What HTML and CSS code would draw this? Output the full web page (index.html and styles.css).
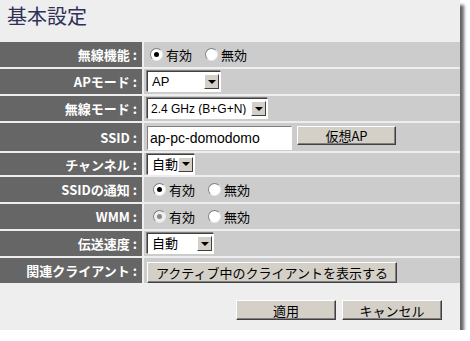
FILE: index.html
```html
<!DOCTYPE html>
<html lang="ja">
<head>
    <meta charset="UTF-8">
    <title>基本設定</title>
    <link rel="stylesheet" href="styles.css">
</head>
<body>
    <div class="panel">
        <h1 class="title">基本設定</h1>

        <div class="form">
            <div class="row">
                <div class="label">無線機能 :</div>
                <div class="value radios radios-first">
                    <span class="radio checked"></span><span class="opt">有効</span>
                    <span class="radio"></span><span class="opt">無効</span>
                </div>
            </div>
            <div class="row">
                <div class="label">APモード :</div>
                <div class="value">
                    <span class="select w-ap"><span class="select-text">AP</span><span class="select-btn"><span class="arrow"></span></span></span>
                </div>
            </div>
            <div class="row">
                <div class="label">無線モード :</div>
                <div class="value">
                    <span class="select w-mode"><span class="select-text small">2.4 GHz (B+G+N)</span><span class="select-btn"><span class="arrow"></span></span></span>
                </div>
            </div>
            <div class="row row-tall">
                <div class="label">SSID :</div>
                <div class="value">
                    <span class="textbox">ap-pc-domodomo</span>
                    <button class="btn btn-vap">仮想AP</button>
                </div>
            </div>
            <div class="row row-short">
                <div class="label">チャンネル :</div>
                <div class="value">
                    <span class="select w-ch"><span class="select-text">自動</span><span class="select-btn"><span class="arrow"></span></span></span>
                </div>
            </div>
            <div class="row">
                <div class="label">SSIDの通知 :</div>
                <div class="value radios">
                    <span class="radio checked"></span><span class="opt">有効</span>
                    <span class="radio"></span><span class="opt">無効</span>
                </div>
            </div>
            <div class="row">
                <div class="label">WMM :</div>
                <div class="value radios">
                    <span class="radio checked disabled"></span><span class="opt">有効</span>
                    <span class="radio"></span><span class="opt">無効</span>
                </div>
            </div>
            <div class="row">
                <div class="label">伝送速度 :</div>
                <div class="value">
                    <span class="select w-rate"><span class="select-text">自動</span><span class="select-btn"><span class="arrow"></span></span></span>
                </div>
            </div>
            <div class="row">
                <div class="label">関連クライアント :</div>
                <div class="value">
                    <button class="btn btn-clients">アクティブ中のクライアントを表示する</button>
                </div>
            </div>
        </div>

        <div class="actions">
            <button class="btn btn-action">適用</button>
            <button class="btn btn-action">キャンセル</button>
        </div>
    </div>
</body>
</html>
```

FILE: styles.css
```css
body {
    margin: 0;
    background-color: #fff;
    font-family: "Liberation Sans", "Noto Sans CJK JP", sans-serif;
    font-size: 13px;
}

.panel {
    width: 460px;
    height: 330px;
    background-color: #eeeeee;
    box-shadow: 4px 5px 3px #666;
}

.title {
    margin: 0;
    padding: 4px 7px 14px;
    font-family: "Noto Sans CJK JP", sans-serif;
    font-size: 20px;
    line-height: 24px;
    font-weight: normal;
    color: #2f3058;
}

.form {
    display: flex;
    flex-direction: column;
    gap: 2px;
}

.row {
    display: grid;
    grid-template-columns: 142px 1fr;
    column-gap: 2px;
    height: 25px;
}
.row-tall {
    height: 28px;
}
.row-short {
    height: 22px;
}

.label {
    background-color: #666666;
    color: #fff;
    font-family: "Noto Sans CJK JP", sans-serif;
    font-weight: bold;
    font-size: 13px;
    padding-right: 5px;
    display: flex;
    align-items: center;
    justify-content: flex-end;
    white-space: pre;
}

.value {
    background-color: #cccccc;
    display: flex;
    align-items: center;
    padding-left: 3px;
}

/* radio buttons */
.radios {
    padding-left: 9px;
}
.radios-first {
    padding-left: 6px;
}
.radio {
    width: 11px;
    height: 11px;
    border-radius: 50%;
    border: 1px solid;
    border-color: #808080 #e8e8e8 #e8e8e8 #808080;
    background-color: #fff;
    margin-right: 3px;
    position: relative;
}
.radio.checked::after {
    content: "";
    position: absolute;
    left: 3px;
    top: 3px;
    width: 5px;
    height: 5px;
    border-radius: 50%;
    background-color: #000;
}
.radio.disabled {
    background-color: #eee;
}
.radio.disabled::after {
    background-color: #888;
}
.opt {
    font-family: "Noto Sans CJK JP", sans-serif;
    margin-right: 13px;
    line-height: 1;
}

/* fake select box */
.select {
    display: flex;
    align-items: center;
    height: 17px;
    background-color: #fff;
    border: 1px solid;
    border-color: #404040 #fff #fff #404040;
    box-shadow: -1px -1px 0 #808080;
    padding: 1px;
}
.select-text {
    flex: 1;
    padding-left: 3px;
    line-height: 1;
    white-space: nowrap;
    overflow: hidden;
}
.select-text.small {
    font-size: 12px;
    padding-left: 2px;
}
.w-ap { width: 70px; }
.w-mode { width: 117px; }
.w-ch { width: 44px; }
.w-rate { width: 63px; }

.select-btn {
    flex: none;
    width: 13px;
    height: 13px;
    background-color: #d4d0c8;
    border: 1px solid;
    border-color: #fff #404040 #404040 #fff;
    display: flex;
    align-items: center;
    justify-content: center;
}
.arrow {
    width: 0;
    height: 0;
    border-left: 4px solid transparent;
    border-right: 4px solid transparent;
    border-top: 4px solid #000;
}

.textbox {
    width: 141px;
    height: 22px;
    background-color: #fff;
    border: 1px solid;
    border-color: #808080 #fff #fff #808080;
    padding-left: 2px;
    display: flex;
    align-items: center;
    font-size: 14px;
    margin-top: 1px;
}

/* windows style buttons */
.btn {
    font-family: "Noto Sans CJK JP", sans-serif;
    font-size: 13px;
    line-height: 1;
    color: #000;
    background-color: #d4d0c8;
    border: 1px solid;
    border-color: #fff #404040 #404040 #fff;
    box-shadow: inset -1px -1px 0 #808080;
    padding: 0;
}
.btn-vap {
    width: 99px;
    height: 19px;
    margin-left: 5px;
    margin-bottom: 3px;
}
.btn-clients {
    width: 250px;
    height: 21px;
    margin-top: 4px;
}

.actions {
    display: flex;
    justify-content: flex-end;
    gap: 6px;
    padding: 17px 18px 0 0;
}
.btn-action {
    width: 100px;
    height: 20px;
}
```
